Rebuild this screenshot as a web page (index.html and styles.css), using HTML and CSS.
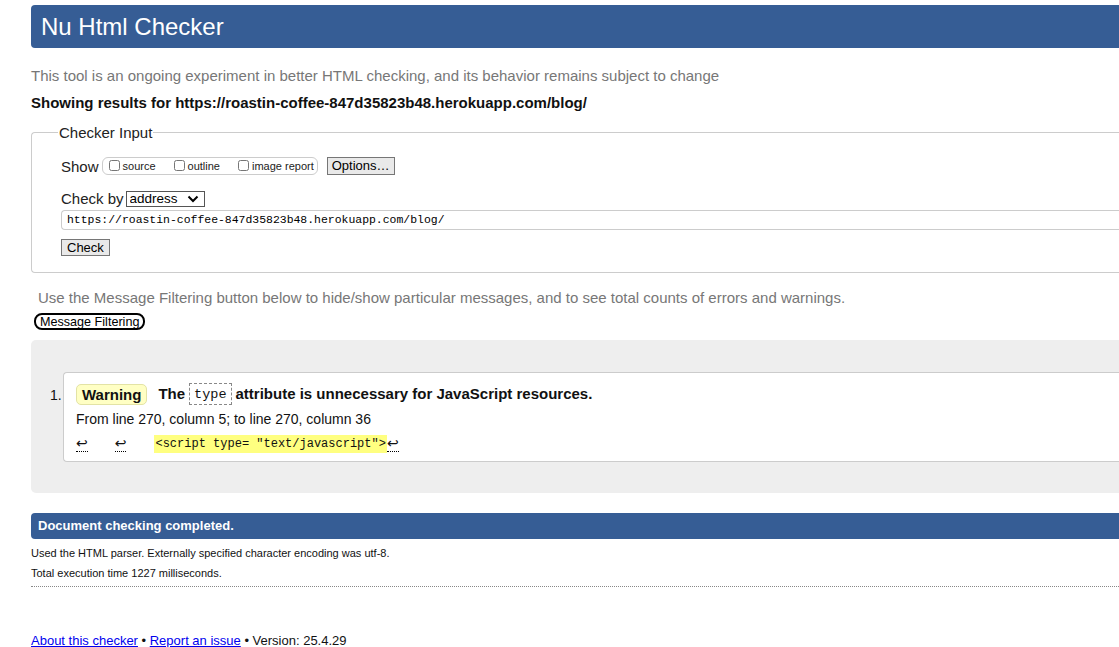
FILE: index.html
```html
<!DOCTYPE html>
<html lang="en">
<head>
<meta charset="utf-8">
<title>Nu Html Checker</title>
<link rel="stylesheet" href="styles.css">
</head>
<body>
<div class="page">
  <h1 class="title">Nu Html Checker</h1>
  <p class="intro">This tool is an ongoing experiment in better HTML checking, and its behavior remains subject to change</p>
  <p class="showing">Showing results for https://roastin-coffee-847d35823b48.herokuapp.com/blog/</p>

  <form class="checker-form">
    <fieldset class="checker-input">
      <legend>Checker Input</legend>
      <div class="row show-row">
        <span class="lbl">Show</span>
        <span class="show-group">
          <label class="opt"><input type="checkbox"> source</label>
          <label class="opt"><input type="checkbox"> outline</label>
          <label class="opt"><input type="checkbox"> image report</label>
        </span>
        <button type="button" class="btn">Options…</button>
      </div>
      <div class="row checkby-row">
        <span class="lbl">Check by</span>
        <span class="select-wrap">
          <select class="select"><option>address</option></select>
          <svg class="chev" width="12" height="8" viewBox="0 0 12 8"><path d="M1.5 1.5 L6 6 L10.5 1.5" fill="none" stroke="#000" stroke-width="2"/></svg>
        </span>
      </div>
      <div class="url-box">https://roastin-coffee-847d35823b48.herokuapp.com/blog/</div>
      <div class="row check-row"><button type="button" class="btn check-btn">Check</button></div>
    </fieldset>
  </form>

  <p class="filter-note">Use the Message Filtering button below to hide/show particular messages, and to see total counts of errors and warnings.</p>
  <button type="button" class="filter-btn">Message Filtering</button>

  <div class="results">
    <ol class="messages">
      <li class="message">
        <p class="msg-head"><span class="badge">Warning</span> <span class="msg-text">The <code class="attr">type</code> attribute is unnecessary for JavaScript resources.</span></p>
        <p class="location">From line 270, column 5; to line 270, column 36</p>
        <p class="extract"><span class="lf">↩</span><span class="gap1"></span><span class="lf">↩</span><span class="gap2"></span><code class="hl">&lt;script type= "text/javascript"&gt;</code><span class="lf">↩</span></p>
      </li>
    </ol>
  </div>

  <p class="done">Document checking completed.</p>
  <p class="small">Used the HTML parser. Externally specified character encoding was utf-8.</p>
  <p class="small">Total execution time 1227 milliseconds.</p>
  <hr class="dotted">

  <p class="footer"><a href="#">About this checker</a> • <a href="#">Report an issue</a> • Version: 25.4.29</p>
</div>
</body>
</html>
```
FILE: styles.css
```css
html, body {
  margin: 0;
  padding: 0;
  overflow: hidden;
  background: #fff;
}
body {
  font-family: "Liberation Sans", Arial, sans-serif;
  color: #111;
}
.page {
  width: 1110px;
  padding: 5px 0 0 31px;
}
.title {
  margin: 0;
  height: 43px;
  box-sizing: border-box;
  background: #365d95;
  color: #fff;
  font-weight: normal;
  font-size: 24px;
  line-height: 44px;
  padding-left: 10px;
  border-radius: 4px 0 0 4px;
}
.intro {
  margin: 19px 0 0;
  font-size: 15px;
  line-height: 18px;
  color: #777;
}
.showing {
  margin: 9px 0 0;
  font-size: 15px;
  line-height: 18px;
  font-weight: bold;
}
.checker-form { margin: 12px 0 0; }
.checker-input {
  margin: 0;
  border: 1px solid #ccc;
  border-right: none;
  border-radius: 4px 0 0 4px;
  padding: 0 0 16px 29px;
}
.checker-input legend {
  font-size: 15px;
  color: #222;
  padding: 0 1px;
  margin-left: -3px;
}
.row {
  display: flex;
  align-items: center;
}
.lbl { font-size: 15px; color: #222; }
.show-row { margin-top: 16px; }
.show-group {
  display: inline-flex;
  align-items: center;
  height: 16px;
  margin-left: 3px;
  border: 1px solid #ccc;
  border-radius: 6px;
  padding: 0 3px 0 6px;
}
.opt {
  display: inline-flex;
  align-items: center;
  font-size: 11px;
  color: #222;
  margin-right: 18px;
}
.opt:last-child { margin-right: 0; }
.opt input {
  margin: 0 3px 2px 0;
  width: 11px;
  height: 11px;
}
.btn {
  font-family: "Liberation Sans", Arial, sans-serif;
  font-size: 13px;
  background: #e9e9e9;
  border: 1px solid #767676;
  border-radius: 0;
  padding: 1px 4px;
  color: #000;
  height: 18px;
  line-height: 14px;
  margin-left: 9px;
}
.checkby-row { margin-top: 15px; }
.select-wrap {
  position: relative;
  display: inline-block;
  margin-left: 2px;
}
.select {
  appearance: none;
  -webkit-appearance: none;
  font-family: "Liberation Sans", Arial, sans-serif;
  font-size: 13.5px;
  width: 79px;
  height: 16px;
  border: 1px solid #555;
  border-radius: 0;
  background: #fff;
  color: #000;
  padding: 0 0 0 3px;
  line-height: 14px;
  display: block;
}
.chev {
  position: absolute;
  right: 6px;
  top: 4px;
  pointer-events: none;
}
.url-box {
  margin-top: 3px;
  height: 20px;
  box-sizing: border-box;
  border: 1px solid #ccc;
  border-right: none;
  border-radius: 4px 0 0 4px;
  font-family: "Liberation Mono", "DejaVu Sans Mono", monospace;
  font-size: 11.45px;
  line-height: 18px;
  padding-left: 5px;
  color: #000;
}
.check-row { margin-top: 9px; }
.check-btn { margin-left: 0; padding: 1px 5px; height: 17px; }
.filter-note {
  margin: 16px 0 0 7px;
  font-size: 15px;
  line-height: 18px;
  color: #777;
}
.filter-btn {
  margin: 6px 0 0 3px;
  font-family: "Liberation Sans", Arial, sans-serif;
  font-size: 12.6px;
  background: #fff;
  border: 2px solid #000;
  border-radius: 8px;
  padding: 0 4px;
  height: 17px;
  line-height: 12px;
  color: #000;
  display: block;
}
.results {
  margin-top: 10px;
  background: #eee;
  border-radius: 5px 0 0 5px;
  padding: 32px 0 31px 32px;
  height: 153px;
  box-sizing: border-box;
}
.messages {
  margin: 0;
  padding: 0;
  list-style: none;
}
.message {
  position: relative;
  background: #fff;
  border: 1px solid #ccc;
  border-right: none;
  border-radius: 4px 0 0 4px;
  padding: 10px 0 8px 12px;
  height: 90px;
  box-sizing: border-box;
}
.message::before {
  content: "1.";
  position: absolute;
  left: -14px;
  top: 14px;
  font-size: 14px;
  color: #111;
}
.msg-head {
  margin: 0;
  font-size: 15px;
  font-weight: bold;
  line-height: 22px;
  display: flex;
  align-items: center;
}
.badge {
  display: inline-block;
  background: #ffffc4;
  border: 1px solid #e3e3a5;
  border-radius: 5px;
  padding: 0 5px;
  height: 21px;
  line-height: 20px;
  box-sizing: border-box;
  margin-right: 11px;
}
.msg-text { display: inline-flex; align-items: center; }
.attr {
  font-family: "Liberation Mono", "DejaVu Sans Mono", monospace;
  font-weight: normal;
  font-size: 13.5px;
  border: 1px dashed #888;
  padding: 0 4px;
  height: 22px;
  line-height: 21px;
  margin: 0 4px;
  box-sizing: border-box;
}
.location {
  margin: 5px 0 0;
  font-size: 14px;
  line-height: 18px;
}
.extract {
  margin: 7px 0 0;
  font-size: 14px;
  line-height: 18px;
  display: flex;
  align-items: center;
}
.lf {
  font-family: "DejaVu Sans", sans-serif;
  font-size: 14px;
  border-bottom: 1px dotted #000;
  line-height: 15px;
}
.gap1 { width: 27px; }
.gap2 { width: 28px; }
.hl {
  background: #ffff80;
  font-family: "Liberation Mono", "DejaVu Sans Mono", monospace;
  font-size: 12px;
  line-height: 18px;
  padding: 0 1px;
}
.done {
  margin: 20px 0 0;
  height: 26px;
  background: #365d95;
  color: #fff;
  font-weight: bold;
  font-size: 13px;
  line-height: 26px;
  padding-left: 7px;
  border-radius: 4px 0 0 4px;
}
.small {
  margin: 7px 0 0;
  font-size: 11px;
  line-height: 14px;
}
.small + .small { margin-top: 6px; }
.dotted {
  margin: 6px 0 0;
  border: none;
  border-top: 1px dotted #888;
  height: 0;
}
.footer {
  margin: 46px 0 0;
  font-size: 13px;
  line-height: 16px;
}
.footer a { color: #00e; }
```
